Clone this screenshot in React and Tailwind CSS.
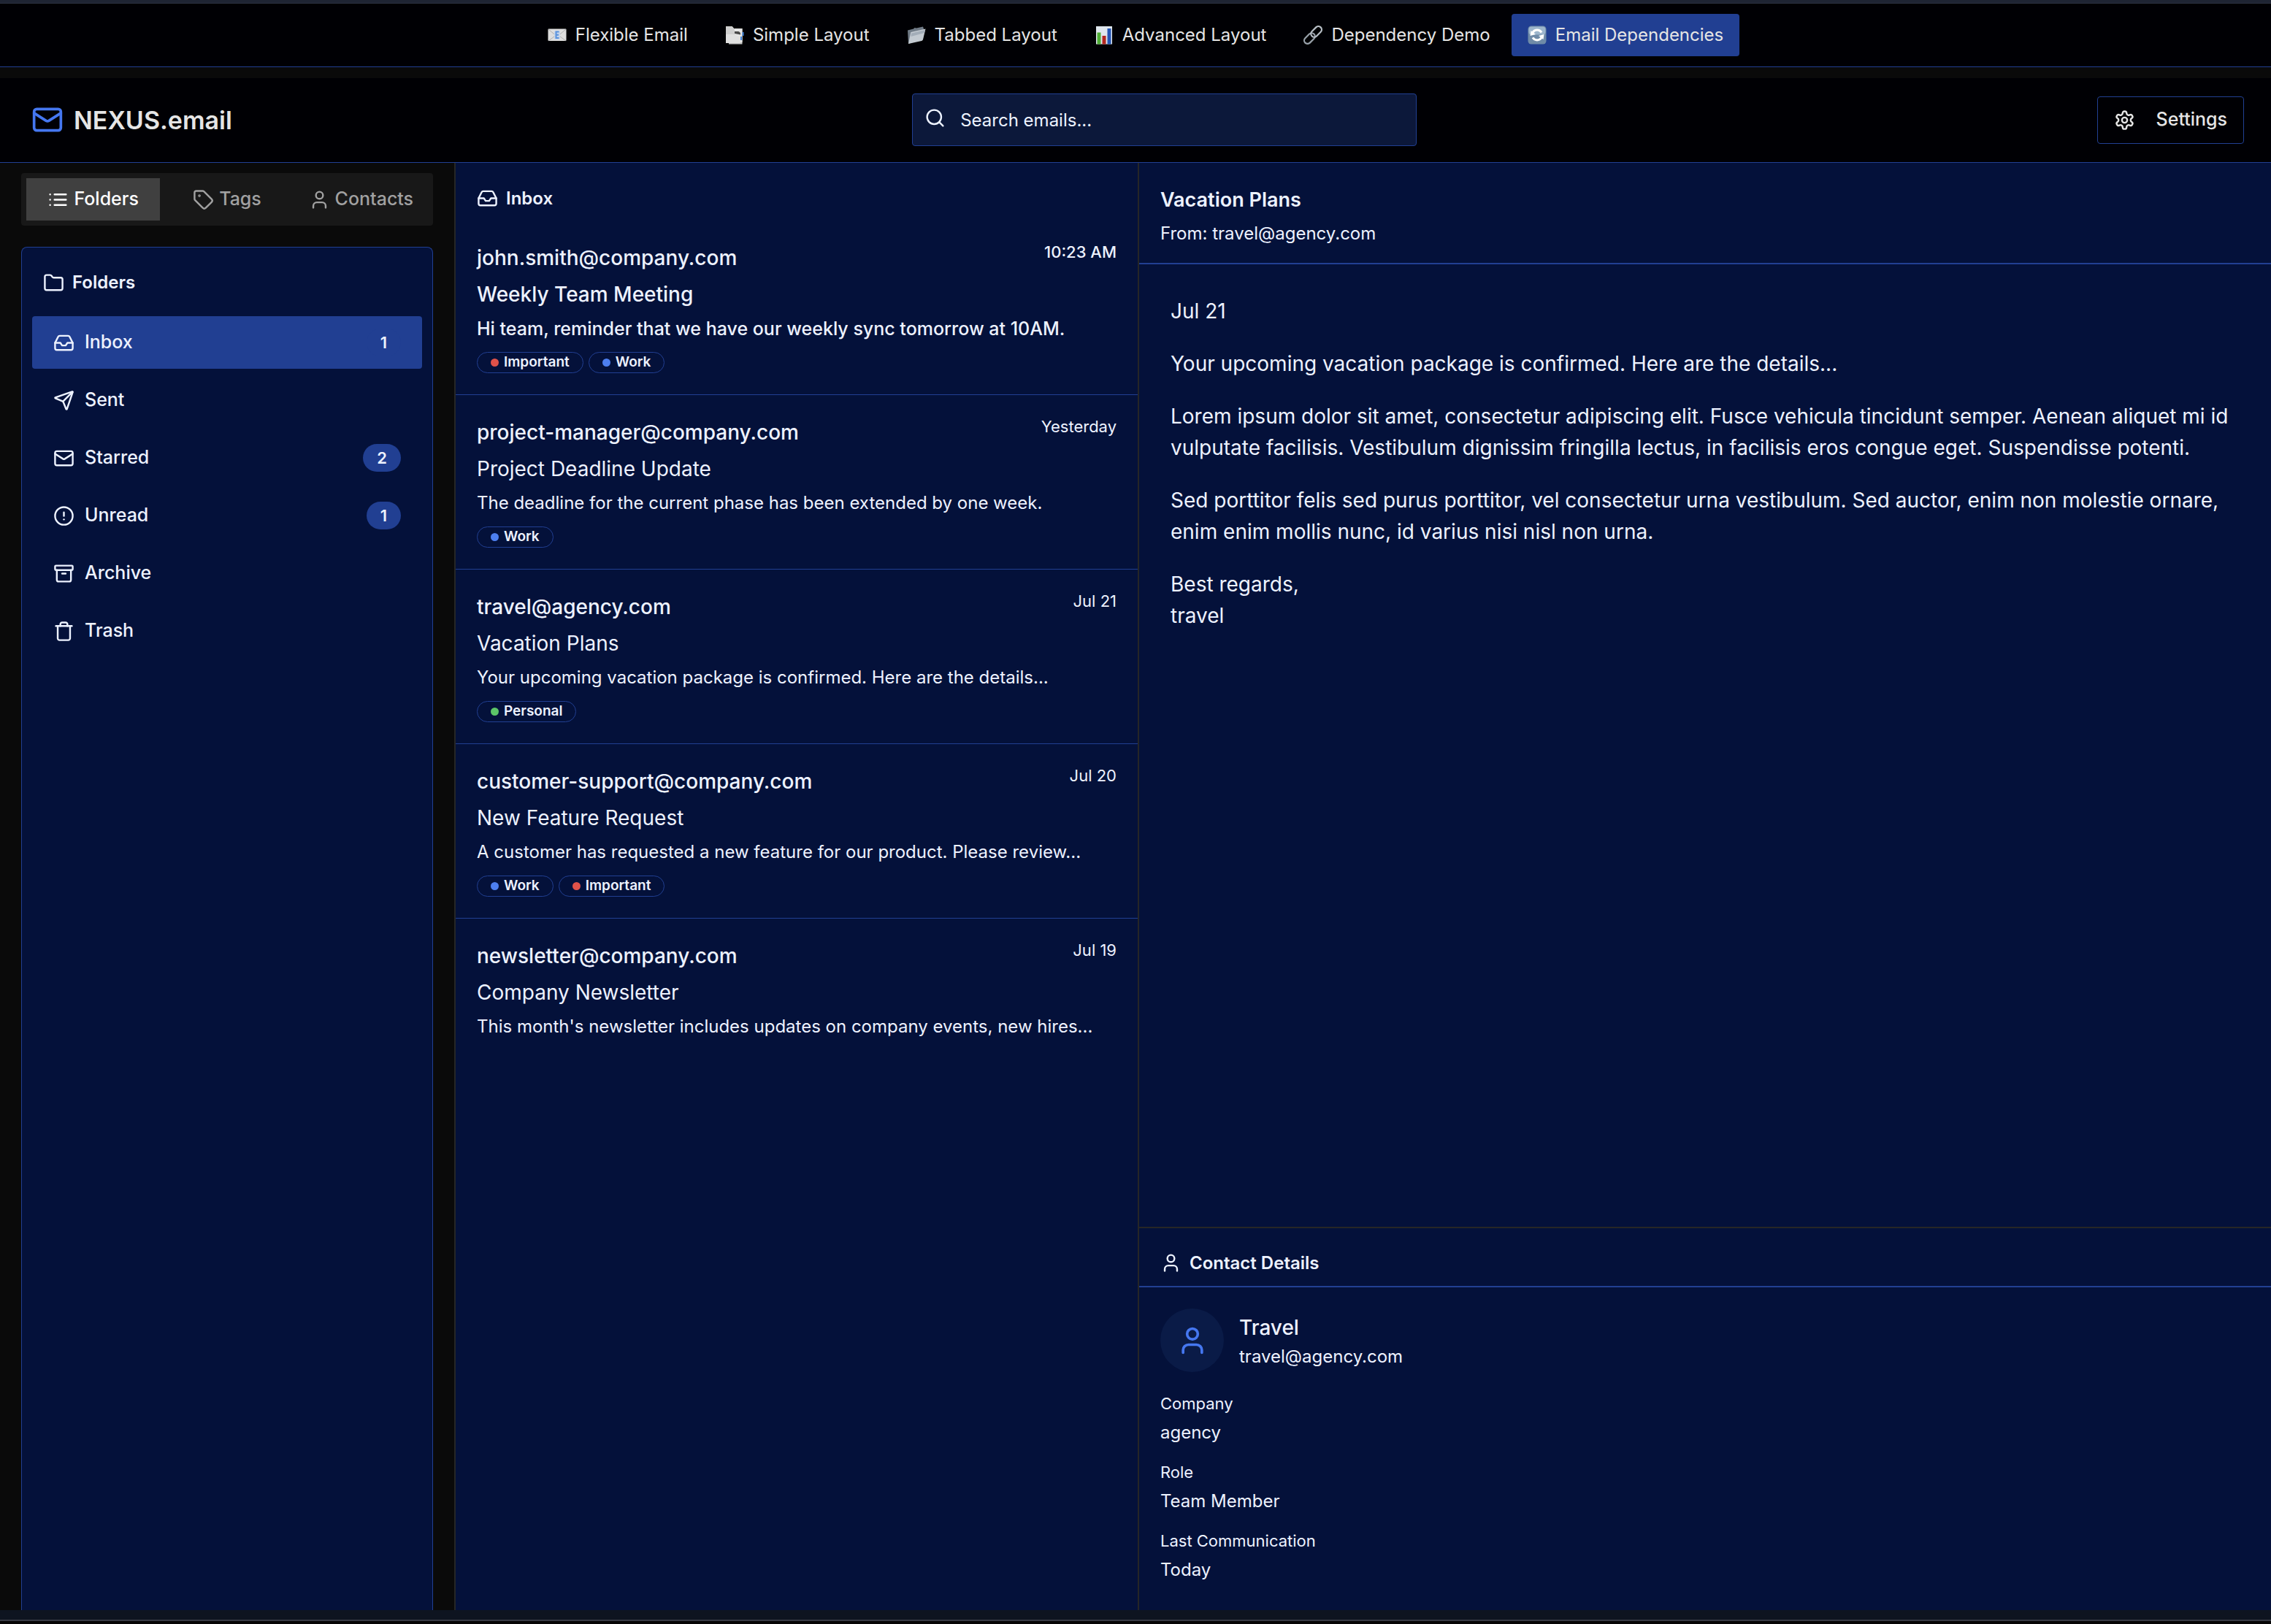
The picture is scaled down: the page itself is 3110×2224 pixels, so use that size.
import React from "react";
import {
  Mail,
  Search,
  Tag,
  User,
  Folder,
  Inbox,
  Send,
  CircleAlert,
  Archive,
} from "lucide-react";

const ICON = "size-[29px] shrink-0";

function ListIcon() {
  return (
    <svg className={ICON} viewBox="0 0 24 24" fill="none" stroke="currentColor" strokeWidth="2" strokeLinecap="round" strokeLinejoin="round" aria-hidden="true">
      <path d="M8 6h13M8 12h13M8 18h13M3 6h.01M3 12h.01M3 18h.01" />
    </svg>
  );
}

function TrashIcon({ className }) {
  return (
    <svg className={className} viewBox="0 0 24 24" fill="none" stroke="currentColor" strokeWidth="2" strokeLinecap="round" strokeLinejoin="round" aria-hidden="true">
      <path d="M3 6h18" />
      <path d="M19 6v14c0 1-1 2-2 2H7c-1 0-2-1-2-2V6" />
      <path d="M8 6V4c0-1 1-2 2-2h4c1 0 2 1 2 2v2" />
    </svg>
  );
}

function GearIcon() {
  return (
    <svg className={ICON} viewBox="0 0 24 24" fill="none" stroke="currentColor" strokeWidth="2" strokeLinecap="round" strokeLinejoin="round" aria-hidden="true">
      <path d="M12.22 2h-.44a2 2 0 0 0-2 2v.18a2 2 0 0 1-1 1.73l-.43.25a2 2 0 0 1-2 0l-.15-.08a2 2 0 0 0-2.73.73l-.22.38a2 2 0 0 0 .73 2.73l.15.1a2 2 0 0 1 1 1.72v.51a2 2 0 0 1-1 1.74l-.15.09a2 2 0 0 0-.73 2.73l.22.38a2 2 0 0 0 2.73.73l.15-.08a2 2 0 0 1 2 0l.43.25a2 2 0 0 1 1 1.73V20a2 2 0 0 0 2 2h.44a2 2 0 0 0 2-2v-.18a2 2 0 0 1 1-1.73l.43-.25a2 2 0 0 1 2 0l.15.08a2 2 0 0 0 2.73-.73l.22-.39a2 2 0 0 0-.73-2.73l-.15-.08a2 2 0 0 1-1-1.74v-.5a2 2 0 0 1 1-1.74l.15-.09a2 2 0 0 0 .73-2.73l-.22-.38a2 2 0 0 0-2.73-.73l-.15.08a2 2 0 0 1-2 0l-.43-.25a2 2 0 0 1-1-1.73V4a2 2 0 0 0-2-2z" />
      <circle cx="12" cy="12" r="3" />
    </svg>
  );
}

const EMOJI = "h-[26px] w-[26px] shrink-0";

function EnvelopeEmoji() {
  return (
    <svg className={EMOJI} viewBox="0 0 26 26" aria-hidden="true">
      <rect x="0.5" y="4.5" width="25" height="16.5" rx="1" fill="#dedede" />
      <path d="M1 5l10 8.500-10 7.500M25 5l-10 8.500 10 7.500" fill="none" stroke="#a3a3a3" strokeWidth="0.800" />
      <rect x="9" y="7" width="8" height="12" rx="2" fill="#c6d6ec" />
      <path d="M15.500 8.500h-4v8.500h4M11.500 12.700h3.500" fill="none" stroke="#5a92dc" strokeWidth="2" />
    </svg>
  );
}

function PagesEmoji() {
  return (
    <svg className={EMOJI} viewBox="0 0 26 26" aria-hidden="true">
      <path d="M6 4h17.500v21.500H5z" fill="#c4c4c4" />
      <path d="M13 4h10.500v19H13z" fill="#e6e6e6" />
      <rect x="23.500" y="9" width="2" height="5" fill="#3f83dc" />
      <rect x="21" y="15" width="2" height="5" fill="#3f83dc" />
      <path d="M13 8h4c3 0 4.500 2 4 4.500L13 11z" fill="#4a4a4a" />
      <path d="M1 1h8.500l3 3.500v8l8 2.500v9H1z" fill="#e0e0e0" />
      <path d="M1 1h8.500l3 3.500v7.500H1z" fill="#cfcfcf" />
    </svg>
  );
}

function FolderEmoji() {
  return (
    <svg className={EMOJI} viewBox="0 0 26 26" aria-hidden="true">
      <path d="M1 6.500l8-2 1.500-1.500 2.500.500 9-2 1 3-1 14L2 25z" fill="#6f7a86" />
      <path d="M5 10.500c0-1 .500-1.500 1.500-1.700L25.500 4.500 22 19c-.300 1-1 1.700-2 2L2 25z" fill="#c3cad1" />
      <path d="M6 10.500L25 6l-1 4L5.500 15z" fill="#a3adb8" />
    </svg>
  );
}

function ChartEmoji() {
  return (
    <svg className={EMOJI} viewBox="0 0 26 26" aria-hidden="true">
      <rect x="2" y="1" width="22" height="24.500" fill="#dfe7ee" />
      <rect x="3.500" y="9.500" width="5" height="16" fill="#4fae35" />
      <rect x="10.500" y="14" width="5" height="11.500" fill="#b3261e" />
      <rect x="17.500" y="4" width="5" height="21.500" fill="#2355b5" />
    </svg>
  );
}

function LinkEmoji() {
  return (
    <svg className={EMOJI} viewBox="0 0 26 26" fill="none" aria-hidden="true">
      <g transform="rotate(-45 13 13)" strokeWidth="2.200">
        <rect x="-2" y="8.500" width="17" height="9" rx="4.500" stroke="#98a1aa" />
        <rect x="11" y="8.500" width="17" height="9" rx="4.500" stroke="#b7bec6" />
      </g>
    </svg>
  );
}

function RefreshEmoji() {
  return (
    <svg className={EMOJI} viewBox="0 0 26 26" aria-hidden="true">
      <rect x="0.500" y="0.500" width="25" height="25" rx="4.500" fill="#6f8ba8" />
      <rect x="1.500" y="1.500" width="23" height="11" rx="4" fill="#9cb5cc" />
      <path d="M7 9.500a7 7 0 0 1 12 0M19 16.500a7 7 0 0 1-12 0" fill="none" stroke="#fff" strokeWidth="3" />
      <path d="M3.500 14l1-7 6.500 5zM22.500 12l-1 7-6.500-5z" fill="#fff" />
    </svg>
  );
}

const navItems = [
  { label: "Flexible Email", Icon: EnvelopeEmoji },
  { label: "Simple Layout", Icon: PagesEmoji },
  { label: "Tabbed Layout", Icon: FolderEmoji },
  { label: "Advanced Layout", Icon: ChartEmoji },
  { label: "Dependency Demo", Icon: LinkEmoji },
  { label: "Email Dependencies", Icon: RefreshEmoji, active: true },
];

const folders = [
  { label: "Inbox", Icon: Inbox, count: 1, active: true },
  { label: "Sent", Icon: Send },
  { label: "Starred", Icon: Mail, count: 2 },
  { label: "Unread", Icon: CircleAlert, count: 1 },
  { label: "Archive", Icon: Archive },
  { label: "Trash", Icon: TrashIcon },
];

const tagColors = {
  Important: "bg-[#e0524a]",
  Work: "bg-[#4d7ff0]",
  Personal: "bg-[#5cc568]",
};

const emails = [
  {
    from: "john.smith@company.com",
    time: "10:23 AM",
    subject: "Weekly Team Meeting",
    preview: "Hi team, reminder that we have our weekly sync tomorrow at 10AM.",
    tags: ["Important", "Work"],
    unread: true,
  },
  {
    from: "project-manager@company.com",
    time: "Yesterday",
    subject: "Project Deadline Update",
    preview: "The deadline for the current phase has been extended by one week.",
    tags: ["Work"],
  },
  {
    from: "travel@agency.com",
    time: "Jul 21",
    subject: "Vacation Plans",
    preview: "Your upcoming vacation package is confirmed. Here are the details...",
    tags: ["Personal"],
  },
  {
    from: "customer-support@company.com",
    time: "Jul 20",
    subject: "New Feature Request",
    preview: "A customer has requested a new feature for our product. Please review...",
    tags: ["Work", "Important"],
  },
  {
    from: "newsletter@company.com",
    time: "Jul 19",
    subject: "Company Newsletter",
    preview: "This month's newsletter includes updates on company events, new hires...",
    tags: [],
  },
];

const contactFields = [
  ["Company", "agency"],
  ["Role", "Team Member"],
  ["Last Communication", "Today"],
];

function TopNav() {
  return (
    <nav className="flex items-center justify-center gap-[7px] border-b border-[#213f92] bg-[#000004] py-[14px]">
      {navItems.map(({ label, Icon, active }) => (
        <a
          key={label}
          href="#"
          aria-current={active ? "page" : undefined}
          className={`flex h-[58px] items-center gap-[12px] rounded-[4px] px-[22px] text-[24px] text-[#e5e5e5] ${active ? "bg-[#213f92]" : ""}`}
        >
          <Icon />
          {label}
        </a>
      ))}
    </nav>
  );
}

function Header() {
  return (
    <header className="flex items-center justify-between border-b border-[#213f92] bg-[#000004] pt-[21px] pr-[37px] pb-[22px] pl-[43px]">
      <div className="flex items-center gap-[14px]">
        <Mail className="size-[44px] text-[#4577f0]" />
        <h1 className="text-[34px] font-semibold text-[#e5e5e5]">NEXUS.email</h1>
      </div>
      <label className="flex h-[72px] w-[691px] items-center gap-[20px] rounded-[4px] border border-[#213f92] bg-[#0c183a] px-[16px] text-[#edf2ff]">
        <Search className="mb-[6px] size-[29px] shrink-0" />
        <input
          type="text"
          aria-label="Search emails"
          placeholder="Search emails..."
          className="w-full min-w-0 bg-transparent pt-[2px] text-[24px] outline-none placeholder:text-[#edf2ff]"
        />
      </label>
      <button
        type="button"
        className="flex h-[65px] items-center gap-[29px] rounded-[4px] border border-[#213f92] px-[22px] text-[25px] font-medium text-[#e5e5e5]"
      >
        <GearIcon />
        Settings
      </button>
    </header>
  );
}

function Sidebar() {
  const tab = "flex items-center justify-center gap-[7px] text-[25px] font-medium";
  return (
    <aside className="flex min-h-0 flex-col px-[29px] pt-[14px]">
      <div role="tablist" className="grid h-[72px] grid-cols-3 rounded-[4px] bg-[#181818] p-[7px]">
        <button type="button" role="tab" aria-selected="true" className={`${tab} bg-[#404040] text-white`}>
          <ListIcon />
          Folders
        </button>
        <button type="button" role="tab" aria-selected="false" className={`${tab} text-[#a1a1a1]`}>
          <Tag className={ICON} />
          Tags
        </button>
        <button type="button" role="tab" aria-selected="false" className={`${tab} text-[#a1a1a1]`}>
          <User className={ICON} />
          Contacts
        </button>
      </div>
      <section className="mt-[29px] flex-1 rounded-t-[8px] border border-b-0 border-[#213f92] bg-[#04113a] px-[14px]">
        <h2 className="flex h-[94px] items-center gap-[11px] px-[15px] pt-[2px] text-[24px] font-semibold">
          <Folder className={ICON} />
          Folders
        </h2>
        <ul className="flex flex-col gap-[7px]">
          {folders.map(({ label, Icon, count, active }) => (
            <li key={label}>
              <button
                type="button"
                className={`flex h-[72px] w-full items-center gap-[14px] rounded-[4px] px-[29px] text-[25px] font-medium ${active ? "bg-[#213f92]" : ""}`}
              >
                <Icon className={ICON} />
                <span>{label}</span>
                {count && (
                  <span className="ml-auto flex h-[38px] items-center rounded-full bg-[#213f92] px-[19px] text-[22px] font-semibold">
                    {count}
                  </span>
                )}
              </button>
            </li>
          ))}
        </ul>
      </section>
    </aside>
  );
}

function EmailList() {
  return (
    <section className="min-h-0 overflow-hidden bg-[#04113a]">
      <h2 className="flex h-[79px] items-end gap-[11px] px-[29px] pb-[16px] text-[24px] leading-[29px] font-semibold">
        <Inbox className={ICON} />
        Inbox
      </h2>
      <ul className="divide-y divide-[#213f92]">
        {emails.map((mail) => (
          <li key={mail.from} className="p-[29px]">
            <div className="flex items-start justify-between">
              <span className="text-[28px] leading-[44px] font-medium">{mail.from}</span>
              <time className={`text-[22px] leading-[29px] ${mail.unread ? "font-medium" : ""}`}>{mail.time}</time>
            </div>
            <p className={`mt-[6px] truncate text-[28px] leading-[44px] ${mail.unread ? "font-medium" : ""}`}>{mail.subject}</p>
            <p className={`mt-[7px] truncate leading-[36px] ${mail.unread ? "text-[25px] font-medium" : "text-[24px]"}`}>{mail.preview}</p>
            {mail.tags.length > 0 && (
              <div className="mt-[14px] flex gap-[7px]">
                {mail.tags.map((tag) => (
                  <span key={tag} className="flex h-[29px] items-center gap-[7px] rounded-full border border-[#213f92] px-[18px] text-[19px] font-semibold">
                    <span className={`size-[11px] rounded-full ${tagColors[tag]}`} />
                    {tag}
                  </span>
                ))}
              </div>
            )}
          </li>
        ))}
      </ul>
    </section>
  );
}

function Reader() {
  return (
    <div className="flex min-h-0 flex-col bg-[#04113a]">
      <article className="min-h-0 flex-1">
        <header className="border-b-2 border-[#213f92] px-[29px] pt-[29px] pb-[22px]">
          <h2 className="text-[27px] leading-[44px] font-semibold">Vacation Plans</h2>
          <p className="mt-[6px] text-[24px] leading-[36px]">From: travel@agency.com</p>
        </header>
        <div className="space-y-[29px] p-[43px] text-[28px] leading-[43px]">
          <p>Jul 21</p>
          <p>Your upcoming vacation package is confirmed. Here are the details...</p>
          <p>
            Lorem ipsum dolor sit amet, consectetur adipiscing elit. Fusce vehicula tincidunt semper. Aenean aliquet mi id
            vulputate facilisis. Vestibulum dignissim fringilla lectus, in facilisis eros congue eget. Suspendisse potenti.
          </p>
          <p>
            Sed porttitor felis sed purus porttitor, vel consectetur urna vestibulum. Sed auctor, enim non molestie ornare,
            enim enim mollis nunc, id varius nisi nisl non urna.
          </p>
          <p>
            Best regards,
            <br />
            travel
          </p>
        </div>
      </article>
      <section className="border-t-2 border-[#262626]">
        <h2 className="flex h-[81px] items-center gap-[11px] border-b-2 border-[#213f92] px-[29px] pt-[16px] text-[24px] font-semibold">
          <User className={ICON} />
          Contact Details
        </h2>
        <div className="px-[29px] pt-[29px] pb-[37px]">
          <div className="flex items-center gap-[21px]">
            <span className="flex size-[87px] items-center justify-center rounded-full bg-[#0a1b47]">
              <User className="size-[44px] text-[#4577f0]" />
            </span>
            <div>
              <p className="text-[28px] leading-[44px] font-medium">Travel</p>
              <p className="text-[24px] leading-[36px]">travel@agency.com</p>
            </div>
          </div>
          <dl className="mt-[29px] space-y-[22px]">
            {contactFields.map(([name, value]) => (
              <div key={name}>
                <dt className="text-[22px] leading-[29px]">{name}</dt>
                <dd className="mt-[7px] text-[24px] leading-[36px]">{value}</dd>
              </div>
            ))}
          </dl>
        </div>
      </section>
    </div>
  );
}

export default function App() {
  return (
    <div className="flex h-screen flex-col overflow-hidden bg-[#0a0a0a] font-['Inter',sans-serif] text-[#edf2ff]">
      <div className="h-[5px] shrink-0 border-b border-[#2b3140] bg-[#1e2433]" />
      <TopNav />
      <div className="h-[15px] shrink-0" />
      <Header />
      <main className="grid min-h-0 flex-1 grid-cols-[622fr_2px_934fr_2px_1550fr] grid-rows-[minmax(0,1fr)]">
        <Sidebar />
        <div className="bg-[#262626]" />
        <EmailList />
        <div className="bg-[#262626]" />
        <Reader />
      </main>
      <footer className="shrink-0">
        <div className="h-[15px] border-b-2 border-[#393c46] bg-[#0e1420]" />
        <div className="h-[4px] bg-[#060606]" />
      </footer>
    </div>
  );
}
